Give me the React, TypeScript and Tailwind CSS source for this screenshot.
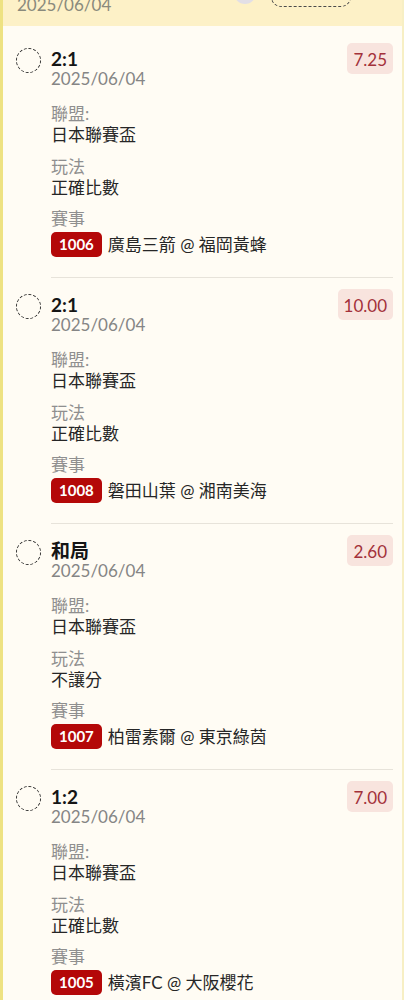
const bets = [
  { pick: '2:1', odds: '7.25', play: '正確比數', id: '1006', match: '廣島三箭 @ 福岡黃蜂' },
  { pick: '2:1', odds: '10.00', play: '正確比數', id: '1008', match: '磐田山葉 @ 湘南美海' },
  { pick: '和局', odds: '2.60', play: '不讓分', id: '1007', match: '柏雷素爾 @ 東京綠茵' },
  { pick: '1:2', odds: '7.00', play: '正確比數', id: '1005', match: '橫濱FC @ 大阪櫻花' },
]

function BetItem({ pick, odds, play, id, match }: (typeof bets)[number]) {
  return (
    <div className="flex gap-[10px] pl-[13px] pr-[9px]">
      <div className="mt-[16px] h-[25px] w-[25px] shrink-0 rounded-full border border-dashed border-[#2a2a2a]" />
      <div className="flex-1 border-b border-[#e7e3da] pt-[11px] pb-[20px]">
        <div className="flex items-start justify-between">
          <div>
            <div className="mt-[5px] text-[19px] font-bold leading-[21px] text-[#151515]">{pick}</div>
            <div className="text-[17px] leading-[20px] text-[#858585]">2025/06/04</div>
          </div>
          <div className="h-[31px] rounded-[5px] bg-[#f8e4de] px-[6px] pt-[2px] text-[17px] leading-[29px] text-[#a3313a]">
            {odds}
          </div>
        </div>

        <div className="mt-[14px] text-[17px] leading-[21px]">
          <div className="text-[#8f8f8f]">聯盟:</div>
          <div className="text-[#262626]">日本聯賽盃</div>
          <div className="mt-[11px] text-[#8f8f8f]">玩法</div>
          <div className="text-[#262626]">{play}</div>
          <div className="mt-[10px] text-[#8f8f8f]">賽事</div>
          <div className="mt-[3px] flex items-center gap-[6px] text-[#262626]">
            <span className="h-[25px] rounded-[5px] bg-[#b40808] px-[8px] text-[15px] font-bold leading-[25px] text-white">
              {id}
            </span>
            <span>{match}</span>
          </div>
        </div>
      </div>
    </div>
  )
}

export default function App() {
  return (
    <div className="min-h-[1000px] border-l-[3px] border-r-[2px] border-l-[#eee282] border-r-[#f7efc4] bg-[#fffcf4] font-[Lato,'Noto_Sans_CJK_TC',sans-serif]">
      {/* group header, scrolled mostly out of view */}
      <div className="flex h-[26px] items-start overflow-hidden bg-[#fdf1c7] pl-[14px]">
        <div className="mt-[-5px] text-[17px] leading-[20px] text-[#8a8a7c]">2025/06/04</div>
        <div className="ml-[123px] mt-[-18px] h-[22px] w-[22px] shrink-0 rounded-full bg-[#e2dfe6]" />
        <div className="ml-[15px] mt-[-21px] h-[28px] w-[80px] shrink-0 rounded-[10px] border border-dashed border-[#4a4a4a]" />
      </div>

      <div className="pt-[6px]">
        {bets.map((b, i) => (
          <BetItem key={i} {...b} />
        ))}
      </div>
    </div>
  )
}
